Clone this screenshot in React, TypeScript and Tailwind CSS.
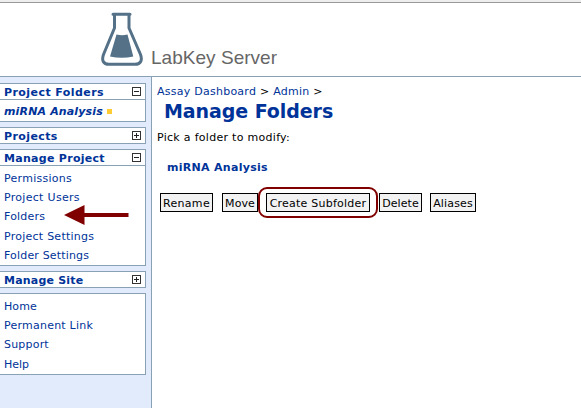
import type { ReactNode } from "react";

function Toggle({ open }: { open: boolean }) {
  return (
    <svg width="9" height="9" viewBox="0 0 9 9" shapeRendering="crispEdges" className="block shrink-0">
      <rect x="0.5" y="0.5" width="8" height="8" fill="#fff" stroke="#333" />
      <path d={open ? "M2 4.5H7" : "M2 4.5H7M4.5 2V7"} stroke="#222" fill="none" />
    </svg>
  );
}

function PanelHeader({ title, open, className }: { title: string; open: boolean; className: string }) {
  return (
    <div className="flex h-[15px] items-center justify-between pr-1 pl-1">
      <span className={`pt-[2px] font-bold ${className}`}>{title}</span>
      <Toggle open={open} />
    </div>
  );
}

function Panel({ children, className }: { children: ReactNode; className: string }) {
  return <section className={`w-[146px] border-y border-r border-[#89a1b4] bg-white ${className}`}>{children}</section>;
}

function NavLink({ children, className }: { children: ReactNode; className: string }) {
  return (
    <a className="flex h-[19.25px] items-center pl-1">
      <span className={className}>{children}</span>
    </a>
  );
}

function Button({ children, className }: { children: ReactNode; className: string }) {
  return (
    <button className={`flex h-[19px] shrink-0 items-center justify-center border border-black bg-[#f2f2f2] pt-[2px] text-black ${className}`}>
      {children}
    </button>
  );
}

export default function App() {
  return (
    <div className="flex h-[408px] w-[581px] flex-col overflow-hidden bg-white font-['DejaVu_Sans',Verdana,sans-serif] text-[11px] leading-[14px] whitespace-nowrap text-[#003399]">
      <header className="flex h-[77px] shrink-0 flex-col border-b border-[#89a1b4]">
        <div className="h-[3px] shrink-0 border-b border-[#999] bg-[#eee]" />
        <div className="flex pt-[9px] pl-[101px]">
          <svg width="42" height="55" viewBox="0 0 42 55" className="block shrink-0">
            <path
              d="M12 2.300H29M13.500 3.500V16L2.500 42.500C0.500 48 2 52.300 8 52.300H34C40 52.300 41.500 48 39.500 42.500L28 16V3.500"
              fill="none"
              stroke="#547188"
              strokeWidth="3"
              strokeLinejoin="round"
              strokeLinecap="round"
            />
            <path d="M15.500 22.500Q21 24 26.500 22.500L32.300 44.500Q21 47 9 44.500Z" fill="#547188" />
          </svg>
          <h1 className="pt-[34px] pl-2 font-['Liberation_Sans',Arial,sans-serif] text-[19px] leading-[24px] tracking-[0.03px] text-[#666]">
            LabKey Server
          </h1>
        </div>
      </header>
      <div className="flex min-h-0 grow">
        <nav className="flex w-[152px] shrink-0 flex-col gap-[5px] border-r border-[#89a1b4] bg-[#e1ebfc] pt-[6px]">
          <Panel className="h-[39px]">
            <PanelHeader title="Project Folders" open className="tracking-[0.43px]" />
            <div className="flex h-[22px] items-center gap-1 border-t border-[#89a1b4] pl-1">
              <span className="pt-[3px] font-bold tracking-[0.15px] italic">miRNA Analysis</span>
              <span className="mt-px size-[5px] bg-[#ffcc33]" />
            </div>
          </Panel>
          <Panel className="h-[17px]">
            <PanelHeader title="Projects" open={false} className="tracking-[0.4px]" />
          </Panel>
          <Panel className="h-[117px]">
            <PanelHeader title="Manage Project" open className="tracking-[0.29px]" />
            <div className="border-t border-[#89a1b4] pt-[2px]">
              <NavLink className="pt-[2px] tracking-[0.27px]">Permissions</NavLink>
              <NavLink className="pt-[2px] tracking-[0.3px]">Project Users</NavLink>
              <div className="flex h-[19.25px] items-center">
                <NavLink className="pt-[2px] tracking-[0.2px]">Folders</NavLink>
                <svg width="65" height="20" viewBox="0 0 65 20" className="-mt-[3px] ml-[19px] block">
                  <path d="M0 10L20.500 0V8H64.500V12H20.500V20Z" fill="#800000" />
                </svg>
              </div>
              <NavLink className="pt-[3px] tracking-[0.25px]">Project Settings</NavLink>
              <NavLink className="pt-[2px] tracking-[0.17px]">Folder Settings</NavLink>
            </div>
          </Panel>
          <Panel className="h-[17px]">
            <PanelHeader title="Manage Site" open={false} className="tracking-[0.2px]" />
          </Panel>
          <Panel className="h-[82px] pt-[2px]">
            <NavLink className="pt-[2px] tracking-[0.1px]">Home</NavLink>
            <NavLink className="pt-[2px] tracking-[0.23px]">Permanent Link</NavLink>
            <NavLink className="pt-[2px] tracking-[0.2px]">Support</NavLink>
            <NavLink className="pt-[3px]">Help</NavLink>
          </Panel>
        </nav>
        <main className="flex grow flex-col items-start pt-[8px] pl-[5px]">
          <div className="tracking-[0.25px] text-black">
            <a className="text-[#003399]">Assay Dashboard</a> &gt; <a className="text-[#003399]">Admin</a> &gt;
          </div>
          <h2 className="pl-[7px] text-[19px] leading-[24px] font-bold tracking-[-0.07px]">Manage Folders</h2>
          <p className="pt-[8px] tracking-[0.29px] text-black">Pick a folder to modify:</p>
          <p className="pt-[16px] pl-[10px] font-bold tracking-[0.29px]">miRNA Analysis</p>
          <div className="flex items-center pt-[12px] pl-[3px]">
            <Button className="w-[53px] tracking-[0.3px]">Rename</Button>
            <Button className="ml-[9px] w-[36px] tracking-[0.1px]">Move</Button>
            <div className="flex h-[31px] w-[120px] items-center justify-center rounded-[9px] border-2 border-[#800000]">
              <Button className="w-[104px] tracking-[0.23px]">Create Subfolder</Button>
            </div>
            <Button className="ml-px w-[43px] tracking-[0.1px]">Delete</Button>
            <Button className="ml-2 w-[46px] tracking-[0.15px]">Aliases</Button>
          </div>
        </main>
      </div>
    </div>
  );
}
